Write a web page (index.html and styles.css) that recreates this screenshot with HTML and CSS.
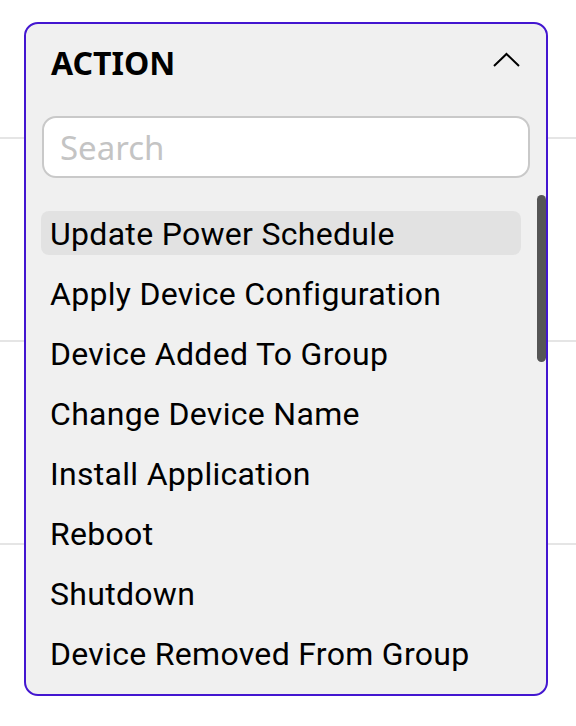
FILE: index.html
```html
<!DOCTYPE html>
<html lang="en">
<head>
  <meta charset="UTF-8">
  <meta name="viewport" content="width=device-width, initial-scale=1.0">
  <title>Action filter</title>
  <link rel="stylesheet" href="styles.css">
</head>
<body>

  <div class="tabela">
    <div class="linha primeira"></div>
    <div class="linha"></div>
    <div class="linha"></div>
    <div class="linha"></div>
  </div>

  <div class="filtro">
    <div class="filtro-topo">
      <h2>ACTION</h2>
      <svg class="seta" width="27" height="16" viewBox="0 0 27 16">
        <polyline points="1,14 13.5,2 26,14" fill="none" stroke="#000" stroke-width="2"/>
      </svg>
    </div>

    <input class="busca" type="text" placeholder="Search">

    <div class="lista-area">
      <ul class="lista">
        <li class="ativo">Update Power Schedule</li>
        <li>Apply Device Configuration</li>
        <li>Device Added To Group</li>
        <li>Change Device Name</li>
        <li>Install Application</li>
        <li>Reboot</li>
        <li>Shutdown</li>
        <li>Device Removed From Group</li>
      </ul>
      <div class="rolagem"></div>
    </div>
  </div>

</body>
</html>
```

FILE: styles.css
```css
body {
  margin: 0;
  background: #fff;
  font-family: Roboto, Arial, sans-serif;
}

.tabela {
  width: 100%;
}

.linha {
  height: 201px;
  border-bottom: 2px solid #e5e5e5;
}

.linha.primeira {
  height: 137px;
}

/* dropdown aberto por cima da tabela */
.filtro {
  position: absolute;
  top: 22px;
  left: 24px;
  width: 520px;
  height: 670px;
  background: #f0f0f0;
  border: 2px solid #4316d0;
  border-radius: 14px;
  overflow: hidden;
  display: flex;
  flex-direction: column;
}

.filtro-topo {
  height: 76px;
  display: flex;
  align-items: center;
  justify-content: space-between;
  padding: 0 26px 0 25px;
  flex-shrink: 0;
}

.filtro-topo h2 {
  margin: 2px 0 0 0;
  font-family: "Noto Sans", sans-serif;
  font-weight: 700;
  font-size: 32px;
  line-height: 40px;
  color: #000;
}

.seta {
  margin-top: -4px;
}

.busca {
  margin: 16px 16px 0 16px;
  height: 62px;
  box-sizing: border-box;
  border: 2px solid #c9c9c9;
  border-radius: 14px;
  background: #fff;
  padding: 0 16px;
  font-family: "Noto Sans", sans-serif;
  font-size: 33px;
  outline: none;
  flex-shrink: 0;
}

.busca::placeholder {
  color: #c4c4c4;
}

.lista-area {
  position: relative;
  flex: 1;
  margin-top: 17px;
  overflow: hidden;
}

.lista {
  list-style: none;
  margin: 0 0 0 15px;
  padding: 16px 0 0 0;
  width: 480px;
}

.lista li {
  box-sizing: border-box;
  height: 44px;
  padding: 3px 0 0 9px;
  line-height: 41px;
  margin-bottom: 16px;
  border-radius: 8px;
  font-size: 32px;
  letter-spacing: 0.3px;
  color: #000;
  white-space: nowrap;
  cursor: pointer;
}

.lista li.ativo {
  background: #e2e2e2;
}

/* barra de rolagem desenhada */
.rolagem {
  position: absolute;
  top: 0;
  right: 0;
  width: 9px;
  height: 167px;
  background: #555;
  border-radius: 5px;
}
```
